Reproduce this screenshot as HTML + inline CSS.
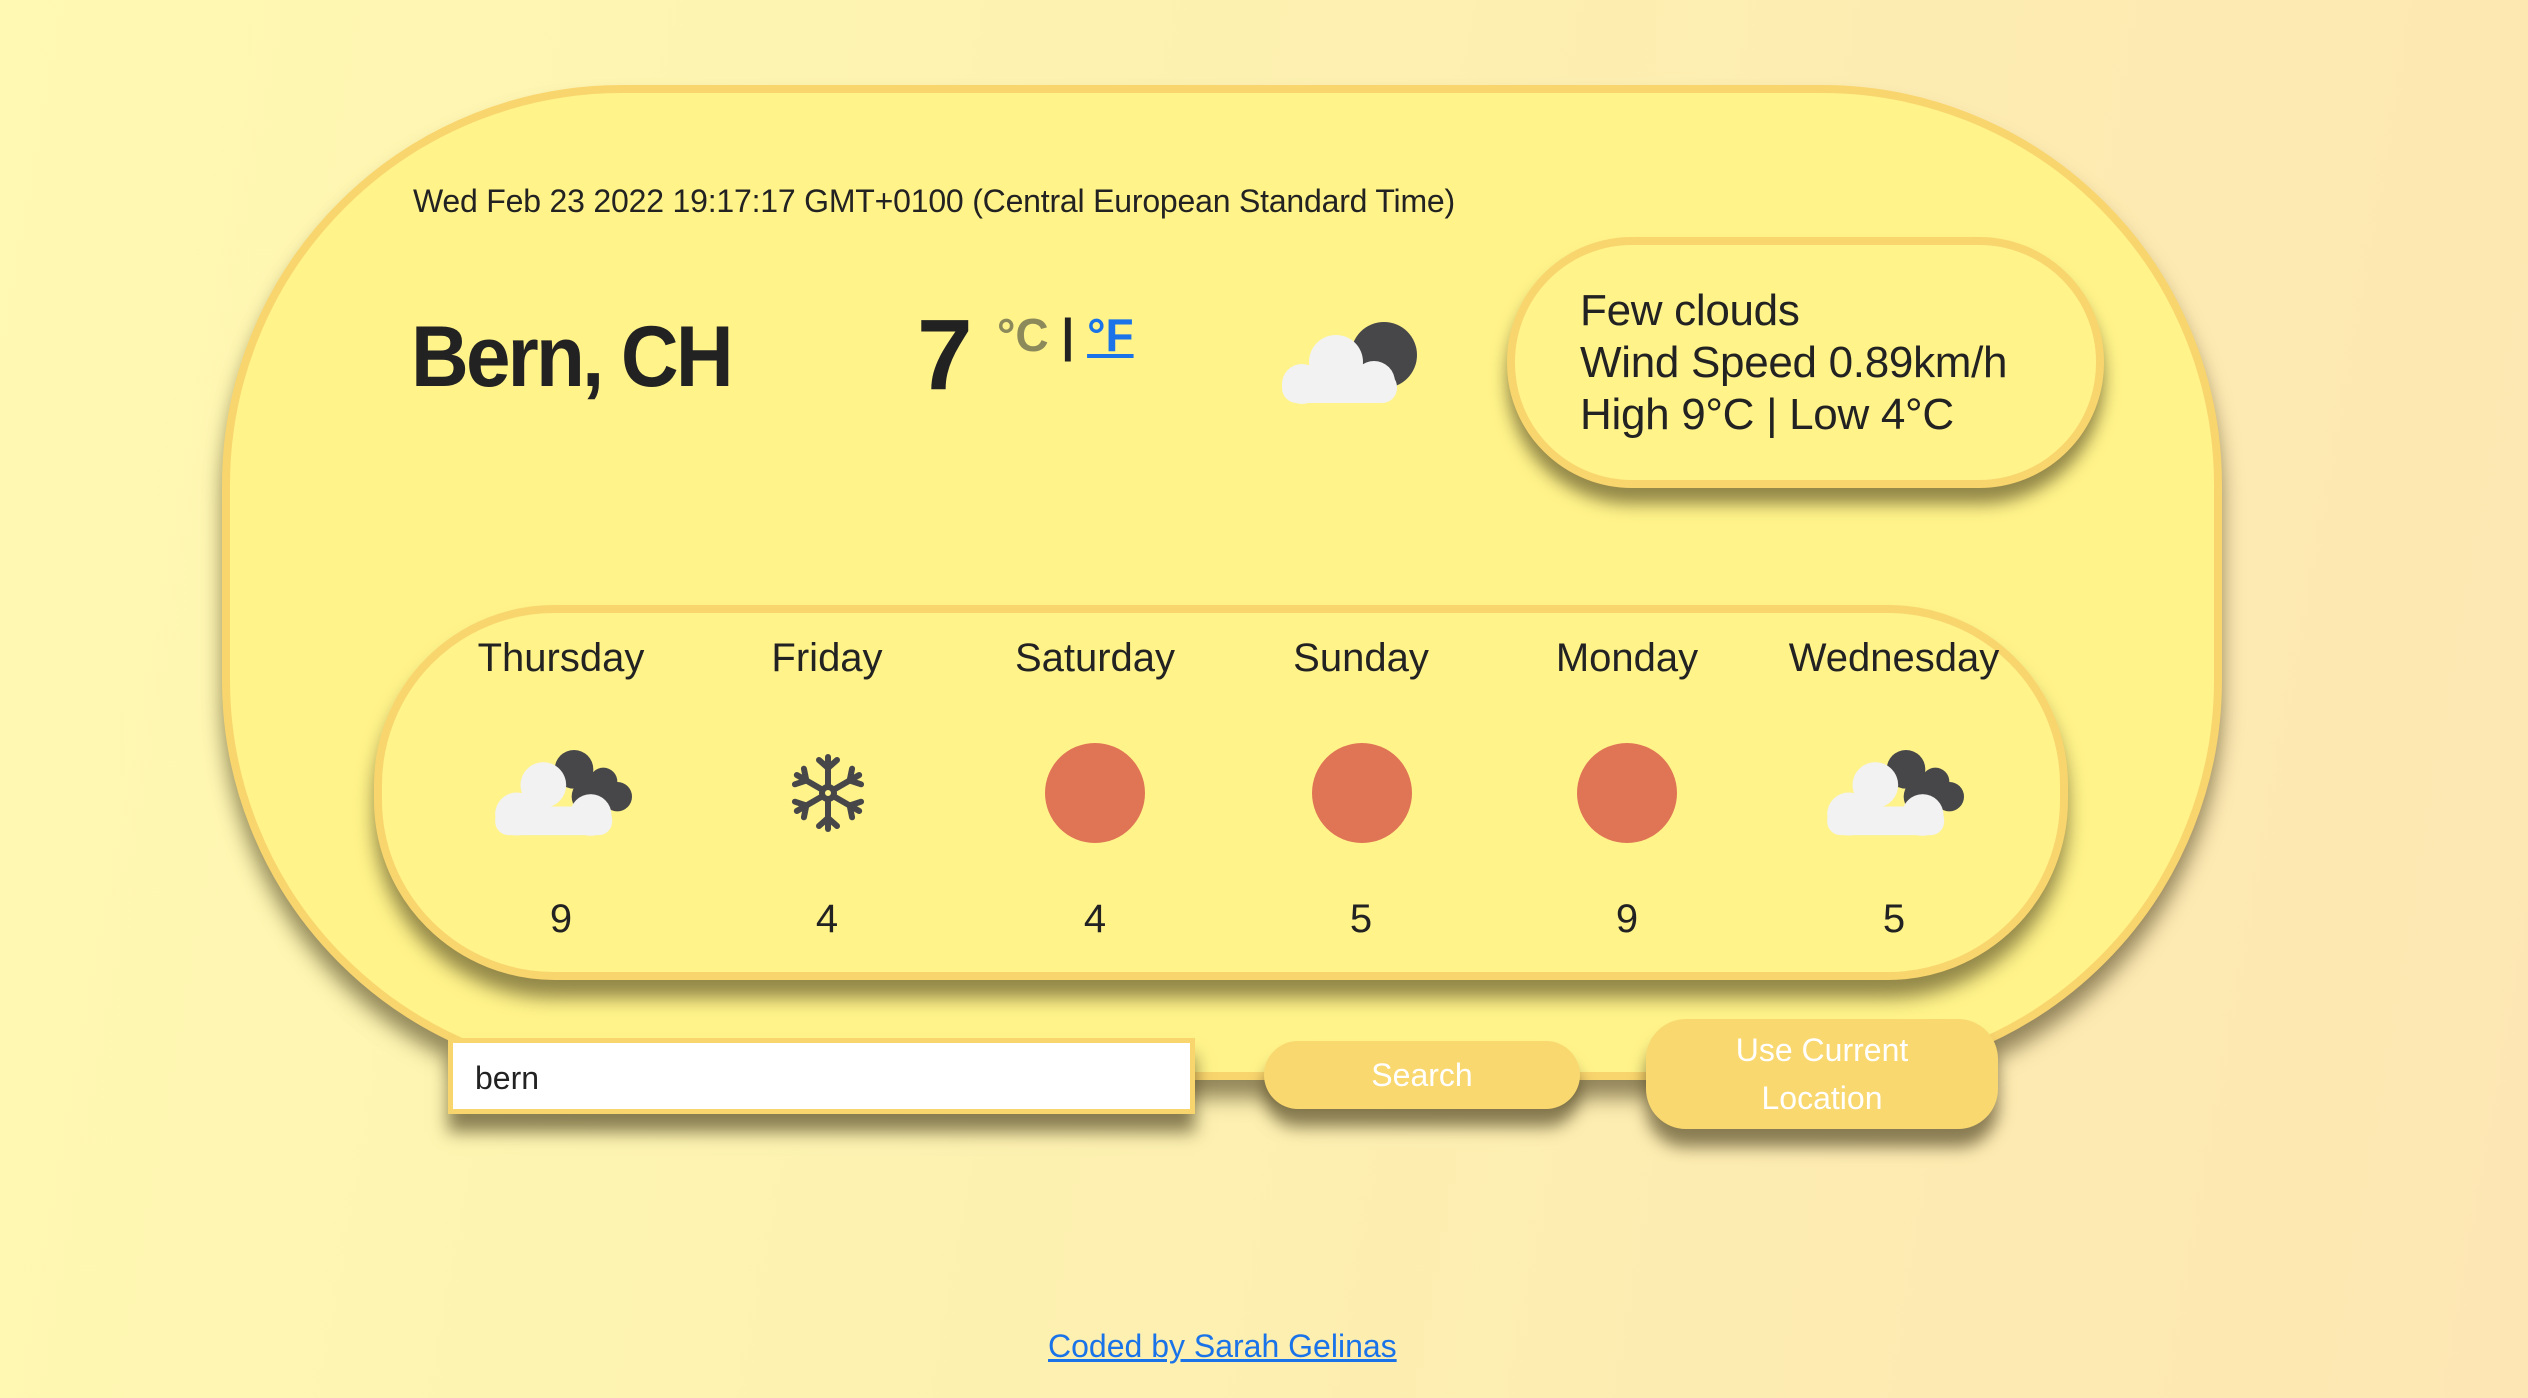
<!DOCTYPE html>
<html><head><meta charset="utf-8"><style>
*{margin:0;padding:0;box-sizing:border-box}
html,body{width:2528px;height:1398px;overflow:hidden}
body{background:linear-gradient(100deg,#fff9b3 0%,#fdf0b0 50%,#fde6b3 100%);font-family:"Liberation Sans",Arial,sans-serif;color:#222;position:relative}
.card{position:absolute;left:222px;top:85px;width:2000px;height:995px;background:#fff38a;border:8px solid #f9d56e;border-radius:400px;box-shadow:0 18px 20px rgba(60,50,20,.55)}
.abs{position:absolute;white-space:nowrap}
.info{position:absolute;left:1507px;top:237px;width:597px;height:251px;background:#fff38a;border:8px solid #f9d56e;border-radius:125px;box-shadow:0 16px 16px rgba(60,50,20,.55);padding:40px 0 0 65px;font-size:44px;line-height:52px;letter-spacing:-0.3px}
.fc{position:absolute;left:374px;top:605px;width:1694px;height:375px;background:#fff38a;border:8px solid #f9d56e;border-radius:180px;box-shadow:0 18px 18px rgba(60,50,20,.55)}
.day{position:absolute;width:266px;text-align:center;font-size:40px}
.sun{position:absolute;width:100px;height:100px;border-radius:50%;background:#e07555}
.inp{position:absolute;left:448px;top:1038px;width:747px;height:76px;background:#fff;border:5px solid #f9d56e;box-shadow:0 18px 16px rgba(60,50,20,.6);font-size:32px;padding:17px 22px}
.btn{position:absolute;background:#f9d86f;color:#fff;font-size:32px;text-align:center;box-shadow:0 18px 16px rgba(60,50,20,.6)}
svg{overflow:visible}
</style></head><body>
<div class="card"></div>
<div class="abs" style="left:413px;top:183px;font-size:32px;letter-spacing:-0.2px">Wed Feb 23 2022 19:17:17 GMT+0100 (Central European Standard Time)</div>
<div class="abs" style="left:411px;top:308px;font-size:86px;font-weight:bold;letter-spacing:-3px;transform:scaleX(0.93);transform-origin:0 0">Bern, CH</div>
<div class="abs" style="left:917px;top:298px;font-size:100px;font-weight:bold">7</div>
<div class="abs" style="left:997px;top:308px;font-size:46px;font-weight:bold;color:#8c8a5a">°C <span style="color:#222">|</span> <span style="color:#1a73e8;text-decoration:underline">°F</span></div>
<svg class="abs" style="left:1280px;top:310px" width="140" height="100" viewBox="0 0 140 100">
<circle cx="104" cy="45" r="33" fill="#47474a"/>
<g fill="#f2f2f2"><circle cx="22" cy="74" r="20"/><circle cx="56" cy="52" r="27"/><circle cx="94" cy="72" r="21"/><rect x="2" y="62" width="115" height="31" rx="15"/></g>
</svg>
<div class="info">Few clouds<br>Wind Speed 0.89km/h<br>High 9°C | Low 4°C</div>
<div class="fc"></div>
<div class="day" style="left:428px;top:636px">Thursday</div>
<div class="day" style="left:694px;top:636px">Friday</div>
<div class="day" style="left:962px;top:636px">Saturday</div>
<div class="day" style="left:1228px;top:636px">Sunday</div>
<div class="day" style="left:1494px;top:636px">Monday</div>
<div class="day" style="left:1761px;top:636px">Wednesday</div>
<svg class="abs" style="left:480px;top:730px" width="180" height="140" viewBox="0 0 540 420">
<g fill="#47474a"><circle cx="282" cy="118" r="58"/><circle cx="370" cy="155" r="42"/><circle cx="412" cy="200" r="44"/><circle cx="330" cy="200" r="55"/></g>
<g fill="#f2f2f2" stroke="#f2f2f2"><circle cx="190" cy="165" r="68"/><circle cx="110" cy="252" r="64"/><circle cx="332" cy="255" r="62"/><rect x="46" y="230" width="350" height="85" rx="40"/></g>
</svg>
<svg class="abs" style="left:1812px;top:730px" width="180" height="140" viewBox="0 0 540 420">
<g fill="#47474a"><circle cx="282" cy="118" r="58"/><circle cx="370" cy="155" r="42"/><circle cx="412" cy="200" r="44"/><circle cx="330" cy="200" r="55"/></g>
<g fill="#f2f2f2" stroke="#f2f2f2"><circle cx="190" cy="165" r="68"/><circle cx="110" cy="252" r="64"/><circle cx="332" cy="255" r="62"/><rect x="46" y="230" width="350" height="85" rx="40"/></g>
</svg>
<svg class="abs" style="left:786px;top:751px" width="84" height="84" viewBox="-42 -42 84 84">
<g stroke="#47474a" stroke-width="6" stroke-linecap="round" fill="none">
<g id="arm"><line x1="0" y1="-8" x2="0" y2="-36"/><polyline points="-9,-33 0,-25 9,-33"/></g>
<use href="#arm" transform="rotate(60)"/><use href="#arm" transform="rotate(120)"/><use href="#arm" transform="rotate(180)"/><use href="#arm" transform="rotate(240)"/><use href="#arm" transform="rotate(300)"/>
<circle r="6"/></g></svg>
<div class="sun" style="left:1045px;top:743px"></div>
<div class="sun" style="left:1312px;top:743px"></div>
<div class="sun" style="left:1577px;top:743px"></div>
<div class="day" style="left:428px;top:897px">9</div>
<div class="day" style="left:694px;top:897px">4</div>
<div class="day" style="left:962px;top:897px">4</div>
<div class="day" style="left:1228px;top:897px">5</div>
<div class="day" style="left:1494px;top:897px">9</div>
<div class="day" style="left:1761px;top:897px">5</div>
<div class="inp">bern</div>
<div class="btn" style="left:1264px;top:1041px;width:316px;height:68px;border-radius:34px;line-height:68px">Search</div>
<div class="btn" style="left:1646px;top:1019px;width:352px;height:110px;border-radius:40px;line-height:48px;padding-top:7px">Use Current<br>Location</div>
<div class="abs" style="left:1048px;top:1328px;font-size:32px;color:#1a73e8;text-decoration:underline">Coded by Sarah Gelinas</div>
</body></html>
